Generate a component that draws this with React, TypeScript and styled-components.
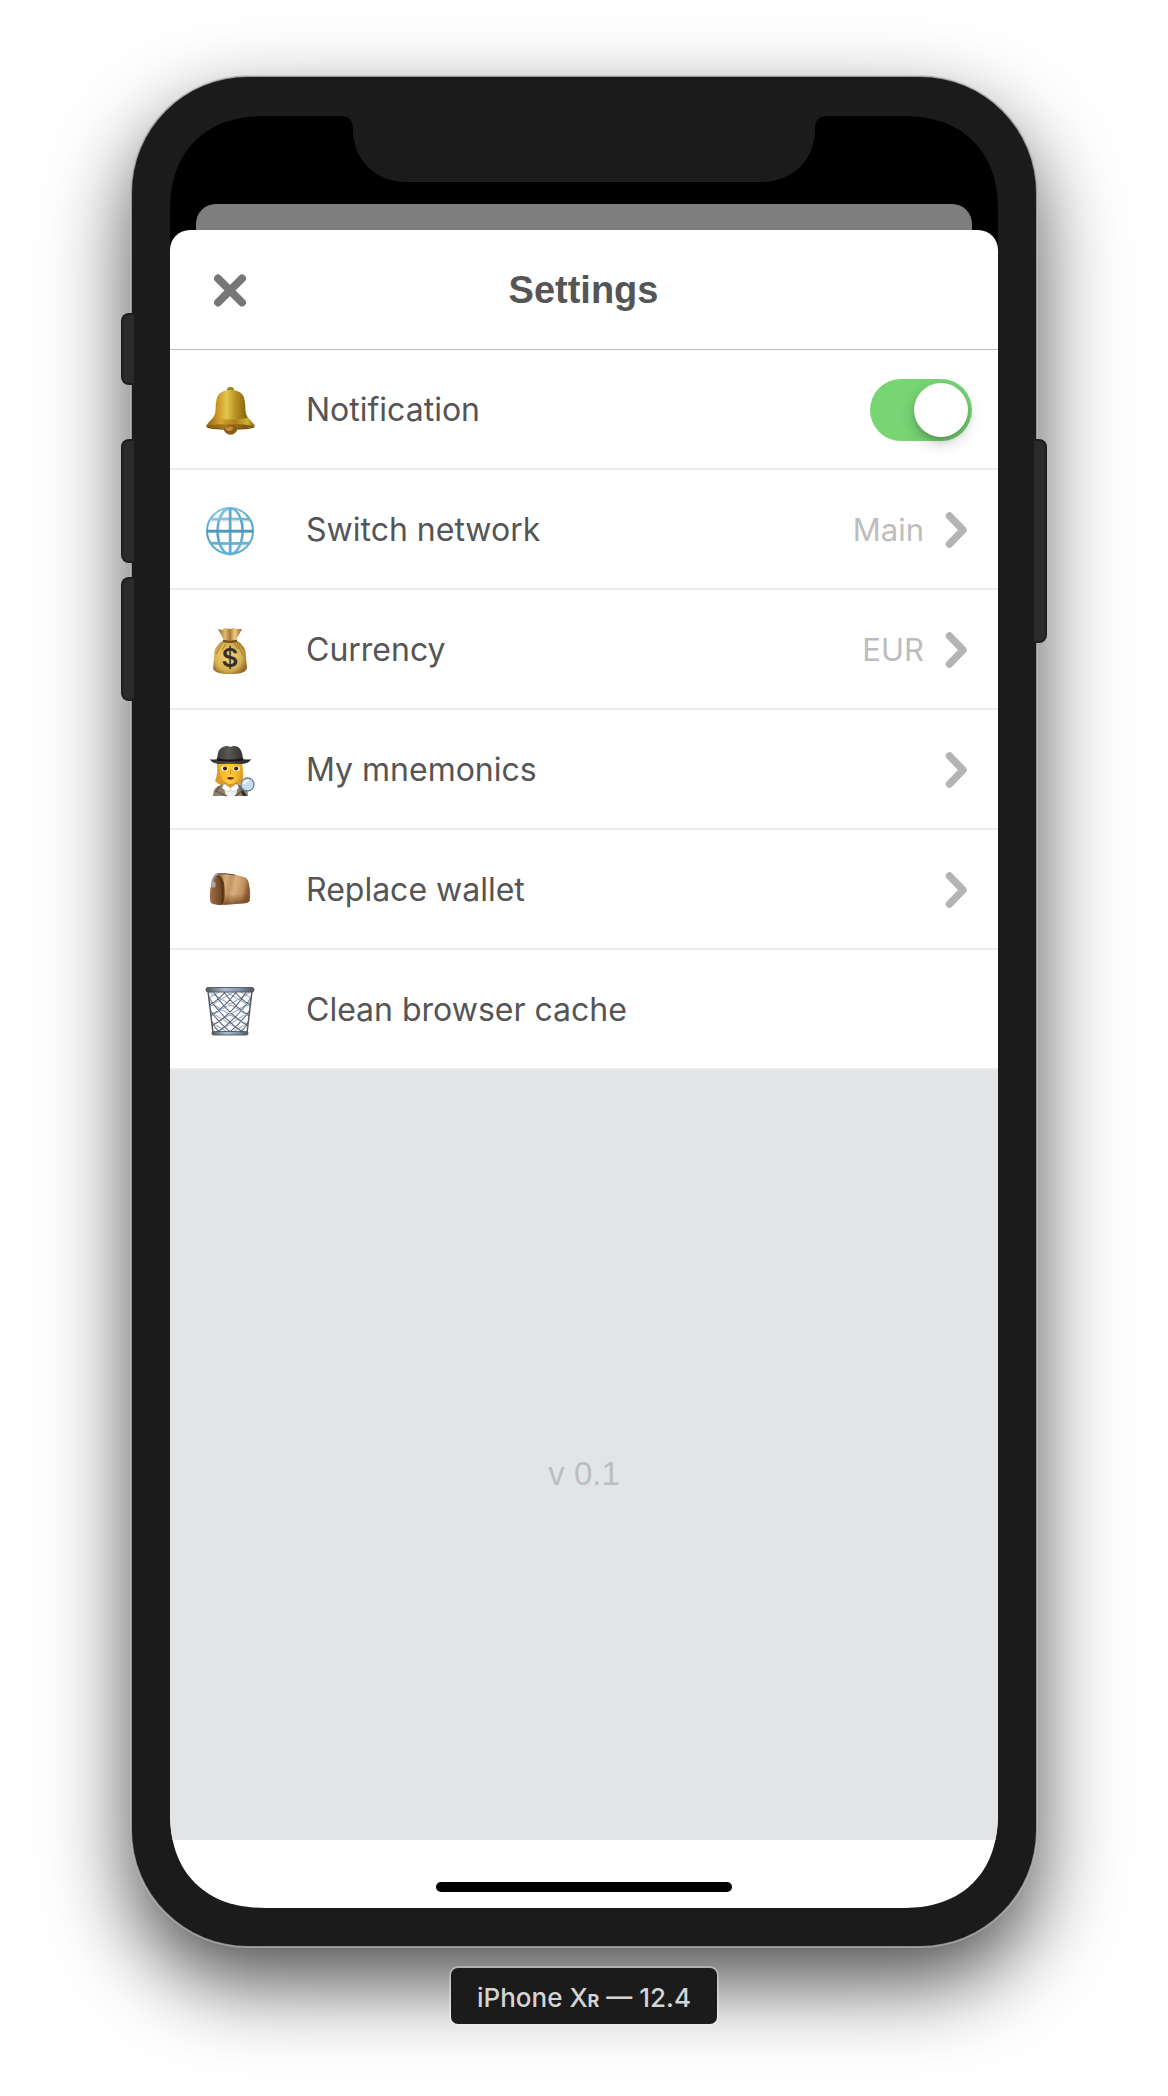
import React, { useState } from "react";
import styled, { createGlobalStyle } from "styled-components";

const sans = `Inter, "Liberation Sans", Arial, sans-serif`;
const grotesk = `"Liberation Sans", Arial, sans-serif`;

const GlobalStyle = createGlobalStyle`
  *, *::before, *::after { box-sizing: border-box; }
  body { margin: 0; background: #fff; font-family: ${sans}; }
`;

const Page = styled.main`
  min-height: 100vh;
  padding: 77px 132px 72px;
  display: flex;
  flex-direction: column;
  align-items: center;
  gap: 22px;
  overflow: hidden;
`;

const Phone = styled.div`
  position: relative;
  width: 100%;
  max-width: 904px;
  padding: 39px 38px 38px;
  border-radius: 116px;
  background: #1b1b1b;
  box-shadow: 0 0 0 1px rgba(140, 140, 140, 0.8), 0 0 0 2px rgba(190, 190, 190, 0.6),
    0 36px 84px rgba(0, 0, 0, 0.7);
`;

const SideKey = styled.span<{ $side: "left" | "right"; $top: number; $length: number }>`
  position: absolute;
  ${(p) => p.$side}: -11px;
  top: ${(p) => p.$top}px;
  width: 13px;
  height: ${(p) => p.$length}px;
  background: #2b2b2b;
  border: 2px solid #1e1e1e;
  border-${(p) => (p.$side === "left" ? "right" : "left")}: 0;
  border-radius: ${(p) => (p.$side === "left" ? "8px 0 0 8px" : "0 8px 8px 0")};
`;

const Screen = styled.div`
  position: relative;
  aspect-ratio: 828 / 1792;
  display: flex;
  flex-direction: column;
  padding-top: 88px;
  border-radius: 96px;
  corner-shape: superellipse(1.2);
  background: #000;
  overflow: hidden;
`;

const Notch = styled.svg`
  position: absolute;
  top: 0;
  left: 50%;
  margin-left: -244px;
  width: 488px;
  height: 66px;
`;

const BackCard = styled.div`
  height: 26px;
  margin: 0 26px;
  border-radius: 20px 20px 0 0;
  background: #7e7e7e;
`;

const Sheet = styled.section`
  flex: 1;
  display: flex;
  flex-direction: column;
  border-radius: 20px 20px 0 0;
  background: #fff;
`;

const Header = styled.header`
  height: 120px;
  padding: 0 36px 0 35px;
  display: grid;
  grid-template-columns: 50px 1fr 50px;
  align-items: center;
  border-bottom: 1px solid #bbb;
`;

const Title = styled.h1`
  margin: 0;
  text-align: center;
  font-family: ${grotesk};
  font-size: 38px;
  line-height: 44px;
  font-weight: 700;
  color: #555;
`;

const CloseButton = styled.button`
  width: 50px;
  height: 50px;
  padding: 0;
  border: 0;
  background: none;
  display: grid;
  place-items: center;
`;

const List = styled.ul`
  margin: 0;
  padding: 0;
  list-style: none;
`;

const Row = styled.li`
  border-bottom: 2px solid #ececec;
`;

const rowLayout = `
  width: 100%;
  height: 118px;
  padding: 2px 26px 0 34px;
  display: flex;
  align-items: center;
  font-family: ${sans};
`;

const RowButton = styled.button`
  ${rowLayout}
  border: 0;
  background: none;
  text-align: left;
`;

const RowLabel = styled.label`
  ${rowLayout}
`;

const Emoji = styled.svg`
  flex: none;
  width: 52px;
  height: 52px;
  margin-right: 50px;
  overflow: visible;
`;

const Label = styled.span`
  flex: 1;
  font-size: 32px;
  line-height: 40px;
  color: #555;
`;

const Value = styled.span`
  margin-right: 20px;
  font-size: 31px;
  line-height: 40px;
  color: #bdbdbd;
`;

const Toggle = styled.input`
  appearance: none;
  flex: none;
  width: 102px;
  height: 62px;
  margin: 0;
  padding: 4px;
  border-radius: 31px;
  background: #ddd;
  display: flex;

  &::before {
    content: "";
    width: 54px;
    height: 54px;
    border-radius: 50%;
    background: #fff;
    box-shadow: 0 6px 16px rgba(0, 0, 0, 0.2), 0 4px 4px rgba(0, 0, 0, 0.12);
  }

  &:checked {
    background: #77d574;
    justify-content: flex-end;
  }
`;

const Filler = styled.div`
  flex: 1;
  display: flex;
  flex-direction: column;
  align-items: center;
  justify-content: center;
  padding-top: 38px;
  background: #e1e5e8;
`;

const Version = styled.p`
  margin: 0;
  font-family: ${grotesk};
  font-size: 33px;
  line-height: 40px;
  color: #bdbdbd;
`;

const HomeArea = styled.footer`
  height: 68px;
  padding-bottom: 16px;
  display: flex;
  justify-content: center;
  align-items: flex-end;
`;

const HomeBar = styled.span`
  width: 296px;
  height: 10px;
  border-radius: 5px;
  background: #000;
`;

const DeviceName = styled.div`
  position: relative;
  height: 56px;
  padding: 0 26px;
  border-radius: 7px;
  background: #1b1b1b;
  box-shadow: 0 0 0 2px rgba(255, 255, 255, 0.3);
  font-size: 26px;
  line-height: 60px;
  font-weight: 500;
  color: #d4d4d4;
  white-space: nowrap;
`;

const SmallCap = styled.span`
  font-size: 18px;
  font-weight: 700;
`;

const emojiBox = "0 1 52 52";

function Bell() {
  return (
    <Emoji viewBox={emojiBox} aria-hidden="true">
      <defs>
        <linearGradient id="bellBody" x1="0" x2="1">
          <stop offset="0" stopColor="#8a5d12" />
          <stop offset="0.22" stopColor="#c8921f" />
          <stop offset="0.42" stopColor="#e2c64e" />
          <stop offset="0.62" stopColor="#b48d1f" />
          <stop offset="0.8" stopColor="#8d6a14" />
          <stop offset="1" stopColor="#a67c18" />
        </linearGradient>
        <linearGradient id="bellRim" x1="0" x2="1">
          <stop offset="0" stopColor="#8f6311" />
          <stop offset="0.3" stopColor="#d6a232" />
          <stop offset="0.6" stopColor="#b08018" />
          <stop offset="0.85" stopColor="#cdb438" />
          <stop offset="1" stopColor="#7d5b0f" />
        </linearGradient>
      </defs>
      <rect x="23" y="4" width="7" height="6" rx="3" fill="#a1851c" />
      <ellipse cx="26.500" cy="44" rx="24" ry="2.800" fill="#6c4208" />
      <circle cx="26.500" cy="45" r="6.800" fill="#875c1c" />
      <circle cx="25" cy="44" r="4" fill="#c98a3c" />
      <path d="M15 11Q19 7 26.500 7T38 11Q41.500 15 41.500 28Q42 34 48 39L51 43Q47 45.500 33 45.500Q30 41.500 26.500 41.500T20 45.500Q6 45.500 2 43L5 39Q11 34 11.500 28Q11.500 15 15 11Z" fill="url(#bellBody)" />
      <path d="M9 35Q26 38 44 35L51 43Q40 41 26.500 41T2 43Z" fill="url(#bellRim)" />
      <path d="M2 43Q26 39 51 43Q40 45.500 33 45.500Q26.500 42 20 45.500Q8 45.500 2 43Z" fill="#7d510e" opacity="0.6" />
    </Emoji>
  );
}

function Globe() {
  return (
    <Emoji viewBox={emojiBox} aria-hidden="true">
      <defs>
        <linearGradient id="globeLine" x1="0" y1="0" x2="0.3" y2="1">
          <stop offset="0" stopColor="#86cbe8" />
          <stop offset="0.55" stopColor="#4d9fc3" />
          <stop offset="1" stopColor="#62b2d5" />
        </linearGradient>
      </defs>
      <g transform="translate(.8 1)" fill="none" stroke="#c9d3d8" strokeWidth="2" opacity="0.7">
        <ellipse cx="26" cy="28" rx="12.500" ry="23" />
        <path d="M7 16.500H45M7 40H45M4 28H48M26 6V50" />
      </g>
      <g fill="none" stroke="url(#globeLine)" strokeWidth="2.400">
        <circle cx="26" cy="28" r="23" strokeWidth="2" />
        <ellipse cx="26" cy="28" rx="12.500" ry="23" />
        <path d="M6 16.200Q26 15 46 16.200M6 40Q26 41 46 40" />
      </g>
      <path d="M24.800 5h2.600v46h-2.600z" fill="#5aabcf" />
      <path d="M3 26.800h46v2.600H3z" fill="#4a99bd" />
    </Emoji>
  );
}

function MoneyBag() {
  return (
    <Emoji viewBox={emojiBox} aria-hidden="true">
      <defs>
        <radialGradient id="bagBody" cx="0.45" cy="0.5" r="0.6">
          <stop offset="0" stopColor="#f0d57c" />
          <stop offset="0.65" stopColor="#d9b352" />
          <stop offset="1" stopColor="#8e6224" />
        </radialGradient>
        <linearGradient id="bagNeck" x1="0" x2="1">
          <stop offset="0" stopColor="#90642a" />
          <stop offset="0.3" stopColor="#e1bd68" />
          <stop offset="0.5" stopColor="#a9783a" />
          <stop offset="0.7" stopColor="#efcf83" />
          <stop offset="1" stopColor="#8b5f25" />
        </linearGradient>
      </defs>
      <path d="M20 17H32Q43 23 42 35L43 45Q42 51 26 51T9 45L10 35Q9 23 20 17Z" fill="url(#bagBody)" />
      <path d="M14 6L18 7L21 5L26 6L30 5L33 6L38 6L32 17H20Z" fill="url(#bagNeck)" />
      <path d="M19 16.500Q26 19 33 16.500V19Q26 21 19 19Z" fill="#7c4e1c" />
      <path d="M17 22L12 31M22 21L18 27M33 21L39 32M30 21L34 26M11 44Q10 48 15 49M41 43Q42 48 37 49" stroke="#9c7132" strokeWidth="1.200" fill="none" opacity="0.7" />
      <text x="26" y="44" textAnchor="middle" fontFamily="Inter, sans-serif" fontSize="26" fontWeight="600" fill="#3a2d2b">$</text>
    </Emoji>
  );
}

function Detective() {
  return (
    <Emoji viewBox={emojiBox} aria-hidden="true">
      <defs>
        <linearGradient id="hat" x1="0" x2="1">
          <stop offset="0" stopColor="#2c2b2a" />
          <stop offset="0.45" stopColor="#5a5855" />
          <stop offset="1" stopColor="#1f1e1e" />
        </linearGradient>
        <linearGradient id="face" x1="0" x2="1">
          <stop offset="0" stopColor="#f5b320" />
          <stop offset="0.5" stopColor="#ffd03a" />
          <stop offset="1" stopColor="#eaa31a" />
        </linearGradient>
      </defs>
      <path d="M13 18Q14 32 11 38Q15 43 22 42L34 42Q40 40 39 30L38 18Z" fill="#d99c2c" />
      <path d="M9 53Q9 44 17 42L27 38L37 42Q44 44 44 53Z" fill="#8b8067" />
      <path d="M19 42L27 39L34 42L32 53H22Z" fill="#eef0f4" />
      <path d="M22 36H31V42L26.500 45L22 42Z" fill="#d89b22" />
      <path d="M20 41L26.500 45L33 41L35 45L29 49L26.500 46L24 49L18 45Z" fill="#fff" stroke="#b8bdc7" strokeWidth="0.600" />
      <path d="M16 43L12 48L16 50L23 53M35 43L38 48L35 50L31 53" stroke="#5f5745" strokeWidth="1.300" fill="none" />
      <path d="M15.500 18H37.500Q38.500 29 35.500 35Q31.500 41 26.500 41T17.500 35Q14 28 15.500 18Z" fill="url(#face)" />
      <ellipse cx="20.500" cy="25.500" rx="3.200" ry="2.600" fill="#fff" />
      <ellipse cx="32.500" cy="25.500" rx="3.200" ry="2.600" fill="#fff" />
      <circle cx="21" cy="25.500" r="2.100" fill="#3d220d" />
      <circle cx="32.200" cy="25.500" r="2.100" fill="#3d220d" />
      <path d="M26.500 26V31.500" stroke="#e0921c" strokeWidth="1.200" />
      <path d="M22.500 35Q26.500 33 30.500 35Q26.500 38.500 22.500 35Z" fill="#6a2b12" />
      <path d="M13 16Q14 5 19 4Q23 2 26.500 4Q30 2 34 4Q38 6 39 16Q44 17 47 16Q46 20 38 21H15Q7 20 6 16Q9 17 13 16Z" fill="url(#hat)" />
      <path d="M13 15Q26 18 39 15V17.500Q26 20 13 17.500Z" fill="#161616" />
      <path d="M39 47L43 53H39L37 49Z" fill="#2e2b33" />
      <circle cx="43.500" cy="41.500" r="6.500" fill="#c5def2" stroke="#737985" strokeWidth="1.300" />
      <path d="M40 41Q41 37 45 37.500" stroke="#fff" strokeWidth="2" fill="none" />
    </Emoji>
  );
}

function Pouch() {
  return (
    <Emoji viewBox={emojiBox} aria-hidden="true">
      <defs>
        <linearGradient id="pouchSide" x1="0" x2="1" y2="0.2">
          <stop offset="0" stopColor="#9a6a40" />
          <stop offset="0.3" stopColor="#d6ab79" />
          <stop offset="0.45" stopColor="#c39462" />
          <stop offset="0.6" stopColor="#dbb07e" />
          <stop offset="0.85" stopColor="#bf8f5e" />
          <stop offset="1" stopColor="#8a5b34" />
        </linearGradient>
        <linearGradient id="pouchShade" x1="0" y1="0" x2="0" y2="1">
          <stop offset="0.65" stopColor="#6b3d1b" stopOpacity="0" />
          <stop offset="1" stopColor="#6b3d1b" stopOpacity="0.8" />
        </linearGradient>
        <linearGradient id="pouchEnd" x1="0" x2="1">
          <stop offset="0" stopColor="#a0714b" />
          <stop offset="1" stopColor="#613817" />
        </linearGradient>
      </defs>
      <path d="M13 10Q27 10 40 14Q44 15 45 21Q47 31 45.500 38Q44 40 38 40.500L19 42Z" fill="url(#pouchSide)" />
      <path d="M13 10Q27 10 40 14Q44 15 45 21Q47 31 45.500 38Q44 40 38 40.500L19 42Z" fill="url(#pouchShade)" />
      <path d="M12 12Q18 10 20 20Q22 38 18 42Q11 42 7 40Q5 36 6.500 25Q8 14 12 12Z" fill="url(#pouchEnd)" />
      <path d="M12 13Q17 13 18 23Q20 36 17.500 41" fill="none" stroke="#543012" strokeWidth="1.200" />
      <path d="M8 23Q9 11 15 11" fill="none" stroke="#9a9a9d" strokeWidth="2.200" />
      <path d="M14 11Q21 10 31 12" fill="none" stroke="#5b5149" strokeWidth="1" />
      <rect x="7" y="19" width="4.500" height="5.500" rx="1" fill="#a5a7aa" />
    </Emoji>
  );
}

function Basket() {
  return (
    <Emoji viewBox={emojiBox} aria-hidden="true">
      <defs>
        <clipPath id="basketShape">
          <path d="M4 8H48L43 50H9Z" />
        </clipPath>
        <linearGradient id="basketRim" x1="0" x2="1">
          <stop offset="0" stopColor="#4e555e" />
          <stop offset="0.4" stopColor="#a8bdd3" />
          <stop offset="0.7" stopColor="#8297ad" />
          <stop offset="1" stopColor="#4c525b" />
        </linearGradient>
      </defs>
      <g clipPath="url(#basketShape)" fill="none">
        <path d="M0 18L20 6M0 27L34 6M2 36L48 8M4 45L50 17M10 51L50 26M24 52L50 36M52 18L32 6M52 27L18 6M50 36L4 8M48 45L2 17M42 51L2 26M28 52L2 36" stroke="#a3b6d0" strokeWidth="1.200" />
        <path d="M2 10Q16 34 40 50M9 8Q24 32 46 44M19 8Q32 26 48 34M30 8Q38 18 50 24M4 24Q14 40 30 52M6 36Q11 46 18 52M50 10Q36 34 12 50M43 8Q28 32 6 44M33 8Q20 26 4 34M22 8Q14 18 2 24M48 24Q38 40 22 52M46 36Q41 46 34 52" stroke="#626873" strokeWidth="1.100" />
      </g>
      <path d="M4 8L9 50M48 8L43 50" stroke="#535a64" strokeWidth="1.500" />
      <rect x="2" y="4.500" width="48" height="4.500" rx="2" fill="url(#basketRim)" stroke="#525861" strokeWidth="0.900" />
      <rect x="8" y="48.500" width="36" height="3.500" rx="1.500" fill="url(#basketRim)" stroke="#525861" strokeWidth="0.900" />
    </Emoji>
  );
}

function Chevron() {
  return (
    <svg width="28" height="40" viewBox="0 0 28 40" fill="none" aria-hidden="true">
      <path d="M5.500 6L19 20L5.500 34" stroke="#b4b4b4" strokeWidth="7.500" strokeLinecap="round" strokeLinejoin="round" />
    </svg>
  );
}

const links = [
  { label: "Switch network", Icon: Globe, value: "Main", chevron: true },
  { label: "Currency", Icon: MoneyBag, value: "EUR", chevron: true },
  { label: "My mnemonics", Icon: Detective, chevron: true },
  { label: "Replace wallet", Icon: Pouch, chevron: true },
  { label: "Clean browser cache", Icon: Basket, chevron: false },
];

export default function App() {
  const [notify, setNotify] = useState(true);
  return (
    <>
      <GlobalStyle />
      <Page>
        <Phone>
          <SideKey $side="left" $top={236} $length={72} />
          <SideKey $side="left" $top={362} $length={124} />
          <SideKey $side="left" $top={500} $length={124} />
          <SideKey $side="right" $top={362} $length={204} />
          <Screen>
            <Notch viewBox="0 0 488 66" aria-hidden="true">
              <path d="M0 0C10 0 13 5 13 14C13 44 36 66 66 66H422C452 66 475 44 475 14C475 5 478 0 488 0Z" fill="#1b1b1b" />
            </Notch>
            <BackCard />
            <Sheet>
              <Header>
                <CloseButton type="button" aria-label="Close">
                  <svg width="34" height="34" viewBox="0 0 34 34" aria-hidden="true">
                    <path d="M5 5.500L29 29.500M29 5.500L5 29.500" stroke="#777" strokeWidth="8" strokeLinecap="round" />
                  </svg>
                </CloseButton>
                <Title>Settings</Title>
              </Header>
              <List>
                <Row>
                  <RowLabel>
                    <Bell />
                    <Label>Notification</Label>
                    <Toggle type="checkbox" role="switch" checked={notify} onChange={(e) => setNotify(e.target.checked)} />
                  </RowLabel>
                </Row>
                {links.map(({ label, Icon, value, chevron }) => (
                  <Row key={label}>
                    <RowButton type="button">
                      <Icon />
                      <Label>{label}</Label>
                      {value && <Value>{value}</Value>}
                      {chevron && <Chevron />}
                    </RowButton>
                  </Row>
                ))}
              </List>
              <Filler>
                <Version>v 0.1</Version>
              </Filler>
              <HomeArea>
                <HomeBar />
              </HomeArea>
            </Sheet>
          </Screen>
        </Phone>
        <DeviceName>
          iPhone X<SmallCap>R</SmallCap> — 12.4
        </DeviceName>
      </Page>
    </>
  );
}
